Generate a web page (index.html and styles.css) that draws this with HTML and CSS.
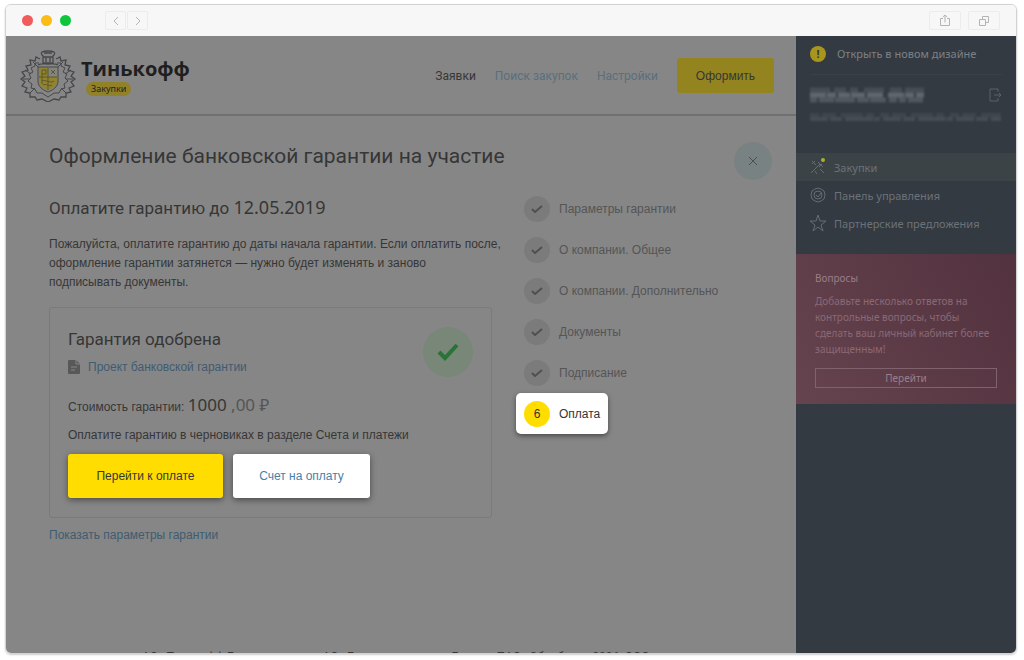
FILE: index.html
```html
<!DOCTYPE html>
<html lang="ru">
  <head>
    <meta charset="UTF-8" />
    <meta name="viewport" content="width=device-width, initial-scale=1.0" />
    <title>Тинькофф Закупки</title>
    <link rel="stylesheet" href="styles.css">
  </head>
  <body>
    <div class="window">
      <div class="toolbar">
        <div class="lights">
          <span class="light red"></span>
          <span class="light amber"></span>
          <span class="light green"></span>
        </div>
        <div class="toolbar-group">
          <button class="tool" aria-label="Назад"><svg width="8" height="10" viewBox="0 0 8 10"><path d="M6 1 2 5l4 4" /></svg></button>
          <button class="tool" aria-label="Вперёд"><svg width="8" height="10" viewBox="0 0 8 10"><path d="M2 1l4 4-4 4" /></svg></button>
        </div>
        <div class="toolbar-group right">
          <button class="tool wide" aria-label="Поделиться"><svg width="12" height="13" viewBox="0 0 12 13"><path d="M4 4.500H1.500v7h9v-7H8M6 8.500V1M3.800 3 6 1l2.200 2" /></svg></button>
          <button class="tool wide" aria-label="Вкладки"><svg width="12" height="12" viewBox="0 0 12 12"><path d="M1.500 4.500h6v6h-6zM4.500 4.500v-3h6v6h-3" /></svg></button>
        </div>
      </div>

      <div class="page">
        <main class="main">
          <header class="header">
            <a class="logo" href="#">
              <svg class="crest" width="56" height="52" viewBox="0 0 56 52">
                <g fill="none" stroke="#45484b">
                  <path d="M20 9l-4-2-1 4-5-1 1 5-5 1 2 4-6 2 3 4-4 3 4 3-3 4 5 2-2 4 5 1 0 4 5 0 2 3 5-1 6 3 6-3 5 1 2-3 5 0 0-4 5-1-2-4 5-2-3-4 4-3-4-3 3-4-6-2 2-4-5-1 1-5-5 1-1-4-4 2" stroke-width="1.300" />
                  <path d="M19 13l-4 0 0 3-4 2 2 4-4 2 2 4-3 3 4 3-1 4 4 1 2 4 5 0 6 4 6-4 5 0 2-4 4-1-1-4 4-3-3-3 2-4-4-2 2-4-4-2 0-3-4 0" />
                  <path d="M3 29h7M46 29h7M5 20l6 4M51 20l-6 4M10 43l5-5M46 43l-5-5M13 12l5 5M43 12l-5 5" />
                  <path d="M18 17h20v14c0 6-5 9-10 11-5-2-10-5-10-11z" fill="#84857f" />
                  <path d="M22 5c-2-3 1-4 6-4s8 1 6 4l-2 2h-8zM23 7v6h10V7M26 7v5M30 7v5M24 3h8M18 15c3-2 6-1 10-1s7-1 10 1" stroke-width="1.300" />
                </g>
                <path d="M19 18h9v9h9v4c0 5-4 7-9 9-5-2-9-4-9-9z" fill="#92842c" />
                <path d="M22 20v14M19 27h18M28 18v22M22 20h4v4h-4M31 20l4 4M31 24l4-4M22 31c3-2 8 3 12 0M23 35c3-2 6 2 9 0" fill="none" stroke="#5c562c" />
              </svg>
              <span class="logo-text">
                <span class="logo-name">Тинькофф</span>
                <span class="logo-badge">Закупки</span>
              </span>
            </a>
            <nav class="nav">
              <a class="current" href="#">Заявки</a>
              <a href="#">Поиск закупок</a>
              <a href="#">Настройки</a>
            </nav>
            <button class="order">Оформить</button>
          </header>

          <div class="content">
            <div class="title-row">
              <h1>Оформление банковской гарантии на участие</h1>
              <button class="close" aria-label="Закрыть"><svg width="10" height="10" viewBox="0 0 10 10"><path d="M1 1l8 8M9 1 1 9" /></svg></button>
            </div>

            <div class="columns">
              <section class="payment">
                <h2>Оплатите гарантию до <span class="date">12.05.2019</span></h2>
                <p class="lead">Пожалуйста, оплатите гарантию до даты начала гарантии. Если оплатить после,<br />
                  оформление гарантии затянется — нужно будет изменять и заново<br />
                  подписывать документы.</p>

                <div class="card">
                  <div class="card-head">
                    <div>
                      <h2>Гарантия одобрена</h2>
                      <a class="doc" href="#">
                        <svg width="12" height="14" viewBox="0 0 12 14"><path d="M1 0h7l4 4v9a1 1 0 0 1-1 1H1a1 1 0 0 1-1-1V1a1 1 0 0 1 1-1z" fill="#585858" /><path d="M8 0v4h4M3 7h6M3 10h4" fill="none" stroke="#868686" /></svg>
                        Проект банковской гарантии
                      </a>
                    </div>
                    <span class="approved"><svg width="22" height="18" viewBox="0 0 22 18"><path d="M2 9l6 6L20 2" /></svg></span>
                  </div>
                  <p class="cost">Стоимость гарантии: <span class="sum">1000<span class="cents"> ,00 ₽</span></span></p>
                  <p class="hint">Оплатите гарантию в черновиках в разделе Счета и платежи</p>
                  <div class="actions">
                    <button class="pay">Перейти к оплате</button>
                    <button class="invoice">Счет на оплату</button>
                  </div>
                </div>

                <a class="more" href="#">Показать параметры гарантии</a>
              </section>

              <ol class="steps">
                <li><span class="mark"><svg width="12" height="8" viewBox="0 0 12 8"><path d="M1 4l3 3 7-6" /></svg></span>Параметры гарантии</li>
                <li><span class="mark"><svg width="12" height="8" viewBox="0 0 12 8"><path d="M1 4l3 3 7-6" /></svg></span>О компании. Общее</li>
                <li><span class="mark"><svg width="12" height="8" viewBox="0 0 12 8"><path d="M1 4l3 3 7-6" /></svg></span>О компании. Дополнительно</li>
                <li><span class="mark"><svg width="12" height="8" viewBox="0 0 12 8"><path d="M1 4l3 3 7-6" /></svg></span>Документы</li>
                <li><span class="mark"><svg width="12" height="8" viewBox="0 0 12 8"><path d="M1 4l3 3 7-6" /></svg></span>Подписание</li>
                <li class="active"><span class="mark">6</span>Оплата</li>
              </ol>
            </div>
          </div>

          <footer class="footer">АО «Тинькофф Банк» лицензия, АО «Единая площадка Банка», ПАО «Сбербанк» 2006, ООО</footer>
        </main>

        <aside class="sidebar">
          <a class="redesign" href="#"><span class="bang">!</span>Открыть в новом дизайне</a>

          <div class="user">
            <div class="user-row">
              <svg class="mosaic" width="114" height="16" viewBox="0 0 114 16">
                <path d="M0 3h114" stroke-dasharray="20 4 12 4 8 6 20 6 12 3 20 0" opacity=".4" />
                <path d="M0 8h114" stroke-dasharray="16 1 9 2 12 1 14 2 16 5" opacity=".9" />
                <path d="M0 13h114" stroke-dasharray="7 2 15 1 20 2 12 1 16 3 8 2" opacity=".6" />
              </svg>
              <button class="exit" aria-label="Выйти"><svg width="13" height="14" viewBox="0 0 13 14"><path d="M9 4V1H1v12h8v-3M5 7h7M10 5l2 2-2 2" /></svg></button>
            </div>
            <svg class="mosaic dim" width="191" height="10" viewBox="0 0 191 10">
              <path d="M0 3h191" stroke-dasharray="9 3 14 5 22 3 8 6" opacity=".5" />
              <path d="M0 7h191" stroke-dasharray="18 2 12 3 28 1 6 3" opacity=".8" />
            </svg>
          </div>

          <nav class="menu">
            <a class="selected" href="#">
              <svg width="18" height="18" viewBox="0 0 18 18"><path d="M3 3l4 4M11 11l4 4M2 15l9-9M9 4l5 5M3 6l3-3M6 13l2 3M10 9l3-3" /><circle class="dot" cx="14" cy="2" r="2" /></svg>
              Закупки
            </a>
            <a href="#">
              <svg width="18" height="18" viewBox="0 0 18 18"><path d="M6 3l3-1 3 1 3 2 1 4-1 4-3 2-3 1-3-1-3-2-1-4 1-4z" /><circle cx="9" cy="9" r="4" /><path d="M7 9l2 2 3-4" /></svg>
              Панель управления
            </a>
            <a href="#">
              <svg width="18" height="18" viewBox="0 0 18 18"><path d="M9 1l2 6h6l-5 4 2 6-5-4-5 4 2-6-5-4h6z" /></svg>
              Партнерские предложения
            </a>
          </nav>

          <section class="questions">
            <h3>Вопросы</h3>
            <p>Добавьте несколько ответов на контрольные вопросы, чтобы сделать ваш личный кабинет более защищенным!</p>
            <button>Перейти</button>
          </section>
        </aside>
      </div>
    </div>
  </body>
</html>
```
FILE: styles.css
```css
* {
  box-sizing: border-box;
}
body {
  margin: 0;
  padding: 4px 7px 6px 5px;
  height: 100vh;
  background: #fff;
  font-family: "Liberation Sans", Arial, sans-serif;
  font-size: 12px;
  color: #363636;
}
a {
  color: #405c71;
  text-decoration: none;
}
button {
  padding: 0;
  border: 0;
  background: none;
  color: inherit;
  font: inherit;
  cursor: pointer;
}
h1, h2, h3, p, ol {
  margin: 0;
  padding: 0;
  font-weight: normal;
}
svg {
  flex: none;
}
.window {
  display: flex;
  flex-direction: column;
  height: 100%;
  overflow: hidden;
  border: 1px solid #d2d2d2;
  border-radius: 6px;
  box-shadow: 0 1px 2px rgba(0, 0, 0, 0.2);
}

/* browser bar */
.toolbar {
  display: flex;
  flex: none;
  align-items: center;
  height: 31px;
  padding: 0 16px;
  background: #f7f7f7;
}
.lights {
  display: flex;
  gap: 8px;
  margin-right: 34px;
}
.light {
  width: 11px;
  height: 11px;
  border-radius: 50%;
}
.red {
  background: #f05b5b;
}
.amber {
  background: #fcbc16;
}
.green {
  background: #10c43c;
}
.toolbar-group {
  display: flex;
  gap: 1px;
}
.right {
  gap: 7px;
  margin-left: auto;
}
.tool {
  display: flex;
  align-items: center;
  justify-content: center;
  width: 21px;
  height: 19px;
  border: 1px solid #ececec;
  border-radius: 2px;
}
.wide {
  width: 32px;
}
.tool path {
  fill: none;
  stroke: #b4b4b4;
}

.page {
  display: flex;
  flex: 1;
  min-height: 0;
}
.main {
  flex: 1;
  overflow: hidden;
  background: #868686;
}
.header {
  display: flex;
  align-items: center;
  height: 80px;
  padding: 1px 22px 0 14px;
  border-bottom: 2px solid #6f7072;
}
.logo {
  display: flex;
  align-items: center;
  gap: 5px;
  color: #1f1f1f;
}
.logo-text {
  display: flex;
  flex-direction: column;
  align-items: flex-start;
}
.logo-name {
  font: bold 20px/26px "Open Sans", sans-serif;
}
.logo-badge {
  margin-left: 5px;
  padding: 0 5px;
  border-radius: 7px;
  background: #91822a;
  font: 9px/14px "Noto Sans", sans-serif;
}
.nav {
  display: flex;
  gap: 19px;
  margin-left: auto;
  font-family: Roboto, sans-serif;
}
.nav a {
  color: #5a6f7c;
}
.nav .current {
  color: #363636;
}
.order {
  width: 97px;
  height: 35px;
  margin-left: 19px;
  border-radius: 3px;
  background: #94841f;
}

.content {
  padding: 26px 24px 105px 43px;
}
.title-row {
  display: flex;
  justify-content: space-between;
  height: 46px;
}
h1 {
  font: 21px/28px Roboto, sans-serif;
}
.close {
  display: flex;
  align-items: center;
  justify-content: center;
  width: 38px;
  height: 38px;
  border-radius: 50%;
  background: #798282;
}
.close path {
  fill: none;
  stroke: #4b5053;
}
.columns {
  display: flex;
  gap: 24px;
}
.payment {
  flex: 0 1 443px;
  min-width: 0;
}
h2 {
  font: 17px/24px Roboto, sans-serif;
}
.payment > h2 {
  padding: 7px 0 15px;
}
.date {
  font: 18px/24px "Noto Sans", sans-serif;
}
.lead {
  line-height: 19px;
  white-space: nowrap;
}
.card {
  margin: 15px 0 7px;
  padding: 19px 18px;
  border: 1px solid #7a7a7a;
  border-radius: 3px;
}
.card-head {
  display: flex;
  justify-content: space-between;
  height: 66px;
}
.doc {
  display: flex;
  align-items: center;
  gap: 8px;
  line-height: 32px;
}
.approved {
  display: flex;
  align-items: center;
  justify-content: center;
  width: 50px;
  height: 50px;
  border-radius: 50%;
  background: #788778;
}
.approved path {
  fill: none;
  stroke: #2a7338;
  stroke-width: 4;
}
.cost {
  line-height: 24px;
}
.sum {
  font: 17px/24px "Noto Sans", sans-serif;
}
.cents {
  color: #555;
}
.hint {
  line-height: 32px;
}
.actions {
  display: flex;
  gap: 10px;
  margin-top: 3px;
}
.actions button {
  width: 155px;
  height: 44px;
  border-radius: 3px;
  box-shadow: 0 2px 6px rgba(0, 0, 0, 0.45);
}
.actions .pay {
  background: #fd0;
}
.actions .invoice {
  width: 137px;
  background: #fff;
  color: #4682a8;
}
.more {
  line-height: 20px;
}
.steps {
  flex: 1;
  list-style: none;
  color: #555;
}
.steps li {
  display: flex;
  align-items: center;
  gap: 9px;
  width: fit-content;
  height: 41px;
  padding: 0 8px;
}
.mark {
  display: flex;
  align-items: center;
  justify-content: center;
  width: 26px;
  height: 26px;
  border-radius: 50%;
  background: #7b7b7b;
}
.mark path {
  fill: none;
  stroke: #505050;
  stroke-width: 2;
}
.steps .active {
  border-radius: 5px;
  background: #fff;
  box-shadow: 0 2px 5px rgba(0, 0, 0, 0.45);
  color: #333;
}
.active .mark {
  background: #fd0;
}
.footer {
  padding: 0 136px;
  font-family: Roboto, sans-serif;
  white-space: nowrap;
}

.sidebar {
  flex: 0 0 220px;
  background: #333a42;
  color: #6c7278;
  font-family: "Noto Sans", sans-serif;
  font-size: 11px;
}
.redesign {
  display: flex;
  align-items: center;
  gap: 11px;
  height: 39px;
  margin: 0 14px;
  padding-bottom: 3px;
  border-bottom: 1px solid #394047;
  color: #7b8187;
}
.bang {
  width: 16px;
  border-radius: 50%;
  background: #a8951c;
  color: #333a42;
  font-weight: bold;
  line-height: 16px;
  text-align: center;
}
.user {
  height: 78px;
  padding: 7px 14px;
}
.user-row {
  display: flex;
  align-items: center;
  justify-content: space-between;
  height: 26px;
}
.mosaic {
  display: block;
  fill: none;
  stroke: #666c72;
  stroke-width: 5;
  filter: blur(1px);
}
.dim {
  margin-top: 4px;
  stroke: #4b5259;
  stroke-width: 4;
}
.exit {
  display: flex;
}
.exit path {
  fill: none;
  stroke: #5b6268;
}
.menu {
  height: 101px;
}
.menu a {
  display: flex;
  align-items: center;
  gap: 7px;
  height: 28px;
  padding: 0 13px;
  color: #6c7278;
}
.menu .selected {
  background: #3c4347;
}
.menu svg {
  overflow: visible;
  fill: none;
  stroke: #666c72;
}
.menu .dot {
  fill: #a8b02c;
  stroke: none;
}
.questions {
  padding: 16px 19px;
  background: linear-gradient(60deg, #65434f, #52323e);
  color: #8a6974;
  font-size: 10px;
}
.questions h3 {
  font-size: 10px;
  line-height: 16px;
  color: #9a7d86;
}
.questions p {
  margin: 7px 0 11px;
  line-height: 16px;
}
.questions button {
  width: 100%;
  height: 20px;
  border: 1px solid #80626d;
  color: #97808a;
}
```
